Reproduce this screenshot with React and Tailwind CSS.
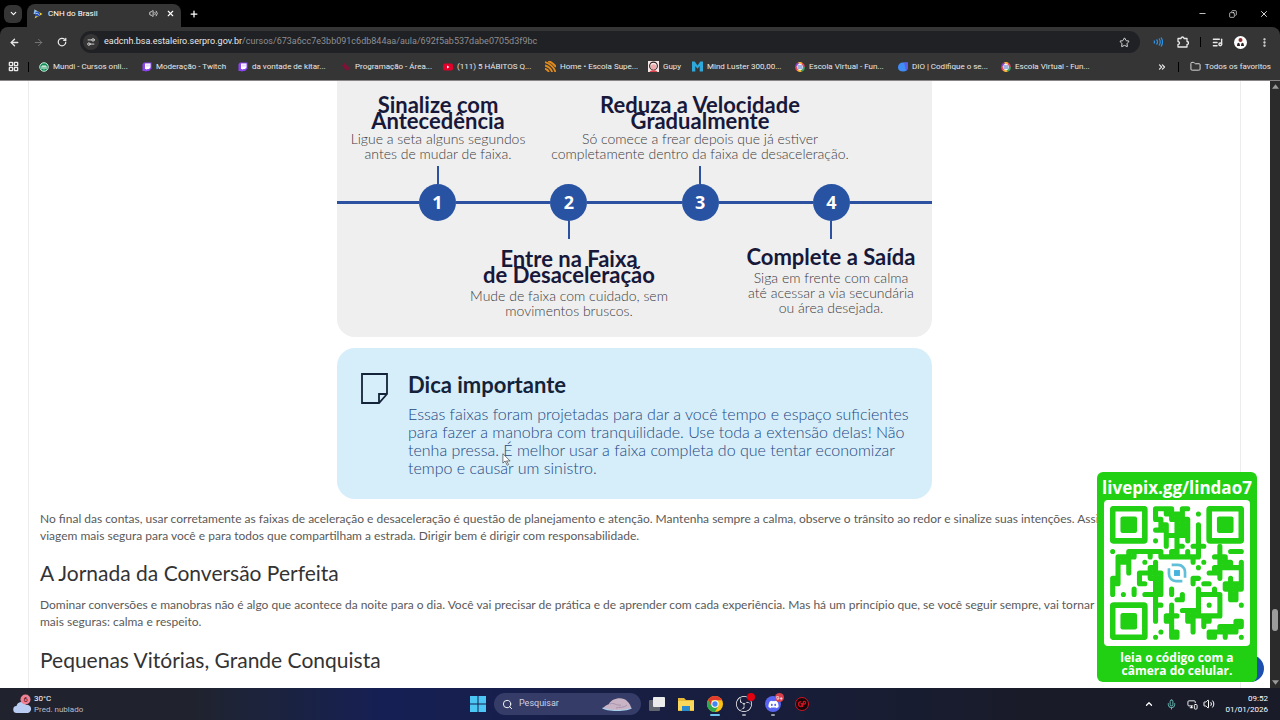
// src/App.jsx

import React, { useState } from "react";
import {
  ArrowLeft,
  ArrowRight,
  ChevronDown,
  ChevronUp,
  ChevronsRight,
  Copy,
  EllipsisVertical,
  Folder,
  LayoutGrid,
  ListMusic,
  Mic,
  Minus,
  MonitorSmartphone,
  Plus,
  RotateCw,
  Search,
  Settings2,
  Star,
  Volume2,
  X,
} from "lucide-react";
import { FaDiscord } from "react-icons/fa";
import { SiObsstudio } from "react-icons/si";

const TwitchIcon = () => (
  <svg viewBox="0 0 20 20" className="size-[10px] shrink-0">
    <path d="M1 4l3-3h15v12l-5 5h-4l-3 2v-2H1z" fill="#8b45f0" />
    <path d="M6 3h11v8l-3 3h-3l-2 2v-2H6z" fill="#fff" />
    <path d="M10 5v4M14 5v4" stroke="#b994f5" strokeWidth="1.5" />
  </svg>
);

const EscolaIcon = () => (
  <svg viewBox="0 0 20 20" className="size-[10px] shrink-0">
    <circle cx="10" cy="10" r="8" fill="#f3f3f3" />
    <g strokeWidth="3.5" fill="none">
      <path d="M2 9a8 8 0 0 1 6-7" stroke="#8a3fc0" />
      <path d="M7 2a8 8 0 0 1 8 2" stroke="#f2b134" />
      <path d="M14 3a8 8 0 0 1 4 7" stroke="#e0455a" />
      <path d="M2 9a8 8 0 0 0 4 8" stroke="#e0455a" />
      <path d="M5 16a8 8 0 0 0 8 2" stroke="#f2b134" />
      <path d="M12 18a8 8 0 0 0 6-8" stroke="#3fa35b" />
    </g>
    <path d="M5 8h10M5 12h10" stroke="#4261c9" strokeWidth="1.8" />
  </svg>
);

const MundiIcon = () => (
  <svg viewBox="0 0 20 20" className="size-[10px] shrink-0">
    <circle cx="10" cy="10" r="8.5" fill="#0d8a54" stroke="#c9f5dd" strokeWidth="2" />
    <path d="M6 14V8h8v6M10 8v7" stroke="#fff" strokeWidth="2" fill="none" />
  </svg>
);

const ProgramacaoIcon = () => (
  <svg viewBox="0 0 20 20" className="size-[10px] shrink-0">
    <path d="M2 7l5-5 4 4 7 6-5 6-5-4z" fill="#7d1236" />
  </svg>
);

const YoutubeIcon = () => (
  <svg viewBox="0 0 20 20" className="size-[10px] shrink-0">
    <rect y="3" width="20" height="14" rx="4" fill="#e3002b" />
    <path d="M8 7l5 3-5 3z" fill="#fff" />
  </svg>
);

const HomeIcon = () => (
  <svg viewBox="0 0 20 20" className="size-[11px] shrink-0">
    <path
      d="M0 2c9 3 16 9 19 18M0 8c7 2 11 6 13 12M0 14c4 1 6 3 7 6M6 0c6 2 11 6 14 11"
      stroke="#e08a1c"
      strokeWidth="3.4"
      fill="none"
    />
  </svg>
);

const GupyIcon = () => (
  <svg viewBox="0 0 20 20" className="size-[11px] shrink-0">
    <rect width="20" height="20" fill="#f6e6e6" />
    <circle cx="10" cy="9" r="7" fill="none" stroke="#2a1d22" strokeWidth="2" />
    <circle cx="10" cy="11" r="5" fill="#f0a9a9" />
    <path d="M3 20c1-4 13-4 14 0z" fill="#d8434e" />
  </svg>
);

const MindIcon = () => (
  <svg viewBox="0 0 20 20" className="size-[11px] shrink-0">
    <path d="M0 1h5l5 7 5-7h5v18h-6V9l-4 5-4-5v10H0z" fill="#2fa8dc" />
  </svg>
);

const DioIcon = () => (
  <svg viewBox="0 0 20 20" className="size-[10px] shrink-0">
    <path d="M0 11C0 4 5 1 10 1h10v9c0 6-4 9-10 9S0 16 0 11z" fill="#3f8df5" />
    <path d="M12 1h8v9c0 4-2 6-4 7z" fill="#5a5fe8" />
  </svg>
);

const bookmarks = [
  { label: "Mundi - Cursos onli...", Icon: MundiIcon, width: "w-[103px]" },
  { label: "Moderação - Twitch", Icon: TwitchIcon, width: "w-[96px]" },
  { label: "da vontade de kitar...", Icon: TwitchIcon, width: "w-[103px]" },
  { label: "Programação - Área...", Icon: ProgramacaoIcon, width: "w-[102px]" },
  { label: "(111) 5 HÁBITOS Q...", Icon: YoutubeIcon, width: "w-[102px]" },
  { label: "Home • Escola Supe...", Icon: HomeIcon, width: "w-[103px]" },
  { label: "Gupy", Icon: GupyIcon, width: "w-[44px]" },
  { label: "Mind Luster 300,00...", Icon: MindIcon, width: "w-[103px]" },
  { label: "Escola Virtual - Fun...", Icon: EscolaIcon, width: "w-[103px]" },
  { label: "DIO | Codifique o se...", Icon: DioIcon, width: "w-[103px]" },
  { label: "Escola Virtual - Fun...", Icon: EscolaIcon, width: "w-[103px]" },
];

// Each row is one line of modules, finder patterns are drawn apart
const qrRows = [
  "........####.##..........",
  "........#.####..#........",
  "........##.####..........",
  ".........##.###.#........",
  "........###.###.#........",
  "..........#####.#........",
  "........#.#.#.#.#........",
  "..........#.##.###..#....",
  "#..#######.##.#.#...#.###",
  ".####..#.########..###...",
  ".###..#.#......#.#..###.#",
  ".#.#...##.......#..######",
  ".#.#.#####........###...#",
  "##...#.###.....##...#.#.#",
  "##...##.##.....#.##..####",
  "#...#...##.#....#..#.####",
  "#.#.#.####.#.#..#####.##.",
  "........#...##..#...#.##.",
  "........##.#....#.#.#...#",
  "........#..#.####...#....",
  "........#.###.#######....",
  "........#.##..##.##....##",
  "...........#...#.#..#####",
  ".........#.##..#..######.",
  "........#..##.....##.#..#",
];

const qrPath = qrRows
  .flatMap((row, y) =>
    [...row].map((cell, x) => {
      if (cell !== "#") return "";
      let d = `M${x + 0.5} ${y + 0.5}h0`;
      if (row[x + 1] === "#") d += `M${x + 0.5} ${y + 0.5}h1`;
      if (qrRows[y + 1]?.[x] === "#") d += `M${x + 0.5} ${y + 0.5}v1`;
      return d;
    })
  )
  .join("");

const QrCode = () => (
  <svg viewBox="0 0 25 25" className="w-full">
    <path d={qrPath} stroke="#22d013" strokeWidth="0.95" strokeLinecap="round" />
    {[
      [0, 0],
      [18, 0],
      [0, 18],
    ].map(([x, y]) => (
      <g key={`${x}-${y}`}>
        <rect x={x + 0.5} y={y + 0.5} width="6" height="6" rx="0.2" fill="none" stroke="#22d013" strokeWidth="1.05" />
        <rect x={x + 1.95} y={y + 1.95} width="3.1" height="3.1" rx="0.4" fill="#22d013" />
      </g>
    ))}
    <g fill="none" stroke="#62bfd8" strokeWidth="0.5">
      <path d="M11.5 11h1.2a1.3 1.3 0 0 1 1.3 1.300v1.1" />
      <path d="M13.5 14h-1.200a1.3 1.3 0 0 1-1.300-1.300v-1.100" />
    </g>
    <rect x="11.95" y="11.95" width="1.1" height="1.1" fill="#43b4dd" />
  </svg>
);

const TabStrip = () => (
  <div className="flex h-[27px] items-center bg-black text-white">
    <button aria-label="Pesquisar guias" className="ml-1 flex size-[18px] items-center justify-center rounded-md bg-[#353535]">
      <ChevronDown size={9} strokeWidth={3} />
    </button>
    <div className="ml-[5px] flex h-[23px] w-[154px] items-center self-end rounded-t-lg bg-[#353535] px-[6px] pb-[4px]">
      <svg viewBox="0 0 20 20" className="size-[10px]">
        <path d="M3 1l16 9-16 9 4-9z" fill="#f2d13d" />
        <path d="M3 1l8 5-3 4H1z" fill="#8fc0f0" />
        <circle cx="9" cy="10" r="5" fill="#2450b8" />
        <path d="M5 9q4-2 8 3" stroke="#e8f0ff" strokeWidth="1.5" fill="none" />
      </svg>
      <span className="ml-[5px] flex-1 text-[8px]">CNH do Brasil</span>
      <button aria-label="Desativar som da guia" className="mr-[8px]">
        <Volume2 size={9} />
      </button>
      <button aria-label="Fechar guia">
        <X size={9} strokeWidth={3} />
      </button>
    </div>
    <button aria-label="Nova guia" className="ml-[8px]">
      <Plus size={10} strokeWidth={3} />
    </button>
    <div className="ml-auto flex items-center gap-[22px] pr-[11px]">
      <button aria-label="Minimizar">
        <Minus size={9} />
      </button>
      <button aria-label="Restaurar">
        <Copy size={8} className="-scale-x-100" />
      </button>
      <button aria-label="Fechar">
        <X size={10} />
      </button>
    </div>
  </div>
);

const Toolbar = () => {
  const [path, setPath] = useState("/cursos/673a6cc7e3bb091c6db844aa/aula/692f5ab537dabe0705d3f9bc");

  return (
    <div className="rounded-t-lg bg-[#353535] text-[#e8e8e8]">
      <div className="flex h-[30px] items-center pr-[10px] pl-[9px]">
        <button aria-label="Voltar">
          <ArrowLeft size={11} strokeWidth={3} />
        </button>
        <button aria-label="Avançar" className="ml-[13px] text-[#7a7a7a]">
          <ArrowRight size={11} strokeWidth={2} />
        </button>
        <button aria-label="Recarregar" className="ml-[13px]">
          <RotateCw size={10} strokeWidth={3} />
        </button>
        <div className="ml-[13px] flex h-[22px] flex-1 items-center rounded-full bg-[#202124] pr-[10px] pl-[3px]">
          <button aria-label="Ver informações do site" className="flex size-[16px] items-center justify-center rounded-full bg-[#353535]">
            <Settings2 size={10} className="-scale-y-100" />
          </button>
          <label className="ml-[5px] flex flex-1 text-[9px]">
            <span>eadcnh.bsa.estaleiro.serpro.gov.br</span>
            <input
              aria-label="Barra de endereço"
              className="flex-1 bg-transparent text-[#8e8f92] outline-none"
              value={path}
              onChange={(e) => setPath(e.target.value)}
            />
          </label>
          <button aria-label="Adicionar aos favoritos">
            <Star size={11} />
          </button>
        </div>
        <button aria-label="Extensão de áudio" className="ml-[13px] text-[#2f8fe0]">
          <svg viewBox="0 0 20 20" className="size-[10px]" fill="none" stroke="currentColor" strokeWidth="2.5">
            <path d="M2 7q2 3 0 6M7 5q4 5 0 10M12 3q5 7 0 14M16 1q6 9 0 18" />
          </svg>
        </button>
        <button aria-label="Extensões" className="ml-[14px]">
          <svg viewBox="0 0 24 24" className="size-[12px]" fill="none" stroke="currentColor" strokeWidth="2.6">
            <path d="M2 5h6a3 3 0 0 1 6 0h6v6a3 3 0 0 1 0 6v5H2v-5a3 3 0 0 0 0-6z" strokeLinejoin="round" />
          </svg>
        </button>
        <span className="mx-[11px] h-[10px] w-px bg-black" />
        <button aria-label="Controlar mídia">
          <ListMusic size={11} strokeWidth={3} />
        </button>
        <button aria-label="Perfil" className="ml-[11px]">
          <svg viewBox="0 0 26 26" className="size-[13px]">
            <circle cx="13" cy="13" r="13" fill="#fff" />
            <circle cx="13" cy="8" r="4" fill="#8c3030" />
            <path d="M6 20c0-9 6-9 6 0zM14 20c0-9 6-9 6 0z" fill="#2a2222" />
          </svg>
        </button>
        <button aria-label="Menu" className="ml-[12px]">
          <EllipsisVertical size={11} strokeWidth={3} />
        </button>
      </div>
      <nav className="flex h-[23px] items-center pr-[9px] pb-[4px] pl-[8px] text-[8px] whitespace-nowrap">
        <button aria-label="Aplicativos">
          <LayoutGrid size={11} strokeWidth={3} />
        </button>
        <span className="mr-[10px] ml-[9px] h-[10px] w-px bg-black" />
        {bookmarks.map(({ label, Icon, width }, i) => (
          <a key={i} href="#favorito" className={`flex shrink-0 items-center gap-[4px] ${width}`}>
            <Icon />
            {label}
          </a>
        ))}
        <button aria-label="Mais favoritos" className="ml-auto">
          <ChevronsRight size={10} strokeWidth={3} />
        </button>
        <span className="mx-[11px] h-[10px] w-px bg-black" />
        <a href="#favoritos" className="flex items-center gap-[4px]">
          <Folder size={11} strokeWidth={2} />
          Todos os favoritos
        </a>
      </nav>
    </div>
  );
};

const Step = ({ title, children, className, textClass = "mt-[2px]" }) => (
  <div className={`text-center ${className}`}>
    <h3 className="text-[22px] leading-[16px] font-bold text-[#17183a]">{title}</h3>
    <p className={`text-[14px] leading-[15px] font-light text-[#3c3c40] ${textClass}`}>{children}</p>
  </div>
);

const Timeline = () => (
  <div className="flex items-center">
    {[1, 2, 3, 4].map((n) => (
      <React.Fragment key={n}>
        <span className={n === 1 ? "h-[3px] w-[82px] bg-[#2b51a0]" : "h-[3px] flex-1 bg-[#2b51a0]"} />
        <div className="flex w-[37px] flex-col items-center">
          <span className={n % 2 ? "h-[18px] w-[2px] bg-[#2b51a0]" : "h-[18px]"} />
          <span className="flex size-[37px] items-center justify-center rounded-full bg-[#2853a3] font-['Open_Sans'] text-[18px] font-bold text-white">
            {n}
          </span>
          <span className={n % 2 ? "h-[18px]" : "h-[18px] w-[2px] bg-[#2b51a0]"} />
        </div>
      </React.Fragment>
    ))}
    <span className="h-[3px] w-[82px] bg-[#2b51a0]" />
  </div>
);

const Lesson = () => (
  <main className="mr-[29px] ml-7 flex-1 border-x border-[#ececec] px-[11px] text-[#5a5a5a]">
    <section className="mx-auto max-w-[595px] rounded-b-[18px] bg-[#efefef] pt-[16px] pb-[19px]">
      <div className="flex">
        <Step className="w-[202px]" title={<>Sinalize com<br />Antecedência</>}>
          Ligue a seta alguns segundos<br />antes de mudar de faixa.
        </Step>
        <Step className="w-[322px]" title={<>Reduza a Velocidade<br />Gradualmente</>}>
          Só comece a frear depois que já estiver<br />completamente dentro da faixa de desaceleração.
        </Step>
      </div>
      <div className="pt-[5px] pb-[10px]">
        <Timeline />
      </div>
      <div className="flex justify-between pl-[101px]">
        <Step className="w-[262px] pt-[2px]" textClass="mt-[5px]" title={<>Entre na Faixa<br />de Desaceleração</>}>
          Mude de faixa com cuidado, sem<br />movimentos bruscos.
        </Step>
        <Step className="w-[202px]" textClass="mt-[5px]" title="Complete a Saída">
          Siga em frente com calma<br />até acessar a via secundária<br />ou área desejada.
        </Step>
      </div>
    </section>

    <section className="relative mx-auto mt-[11px] flex max-w-[595px] gap-5 rounded-[18px] bg-[#d6eefa] px-6 pt-6 pb-[22px]">
      <svg viewBox="0 0 27 31" className="mt-px h-[31px] w-[27px] shrink-0" fill="none" stroke="#14223a" strokeWidth="1.8">
        <path d="M1 1h25v20l-8 9H1zM26 21h-8v9" />
      </svg>
      <div>
        <h3 className="text-[22px] leading-[26px] font-bold text-[#14223a]">Dica importante</h3>
        <p className="mt-[7px] text-[16px] leading-[18px] font-light whitespace-nowrap text-[#24477f]">
          Essas faixas foram projetadas para dar a você tempo e espaço suficientes<br />
          para fazer a manobra com tranquilidade. Use toda a extensão delas! Não<br />
          tenha pressa. É melhor usar a faixa completa do que tentar economizar<br />
          tempo e causar um sinistro.
        </p>
      </div>
      {/* Mouse pointer */}
      <svg viewBox="0 0 12 18" className="absolute top-[105px] left-[165px] h-[13px] w-[9px]">
        <path d="M1 1v13l3-3 3 6 2-1-3-5h5z" fill="#fff" stroke="#444" />
      </svg>
    </section>

    <p className="mt-[11px] text-[12px] leading-[17px] whitespace-nowrap">
      No final das contas, usar corretamente as faixas de aceleração e desaceleração é questão de planejamento e atenção. Mantenha sempre a calma, observe o trânsito ao redor e sinalize suas intenções. Assim, a<br />
      viagem mais segura para você e para todos que compartilham a estrada. Dirigir bem é dirigir com responsabilidade.
    </p>
    <h2 className="mt-[16px] text-[21px] leading-[26px] text-[#333]">A Jornada da Conversão Perfeita</h2>
    <p className="mt-[10px] text-[12px] leading-[17px] whitespace-nowrap">
      Dominar conversões e manobras não é algo que acontece da noite para o dia. Você vai precisar de prática e de aprender com cada experiência. Mas há um princípio que, se você seguir sempre, vai tornar suas<br />
      mais seguras: calma e respeito.
    </p>
    <h2 className="mt-[17px] text-[21px] leading-[26px] text-[#333]">Pequenas Vitórias, Grande Conquista</h2>
  </main>
);

const Scrollbar = () => (
  <div className="flex w-[10px] flex-col items-center justify-between bg-[#2b2b2b] py-[3px]">
    <svg viewBox="0 0 6 4" className="h-[5px] w-[7px]">
      <path d="M0 4l3-4 3 4z" fill="#9a9a9a" />
    </svg>
    <span className="mt-auto mb-[49px] h-[22px] w-[6px] rounded-full bg-[#9d9d9d]" />
    <svg viewBox="0 0 6 4" className="h-[5px] w-[7px]">
      <path d="M0 0l3 4 3-4z" fill="#9a9a9a" />
    </svg>
  </div>
);

const DonationCard = () => (
  <aside className="absolute right-[23px] bottom-[6px] flex w-[160px] flex-col items-center rounded-md bg-[#22d013] pt-[4px] pb-[5px] font-['Open_Sans',sans-serif] font-bold text-white">
    <p className="text-[17px] leading-[24px]">livepix.gg/lindao7</p>
    <div className="w-[146px] rounded-sm bg-white p-[6px]">
      <QrCode />
    </div>
    <p className="mt-[5px] text-center text-[12px] leading-[13px]">
      leia o código com a<br />câmera do celular.
    </p>
  </aside>
);

const Taskbar = () => (
  <footer className="grid h-8 grid-cols-[1fr_auto_1fr] items-center bg-linear-to-r from-[#20232e] from-15% via-[#161f54] via-30% to-[#191b29] to-80% font-[Roboto,sans-serif] text-[8px] text-white">
    <div className="flex items-center pl-[12px]">
      <svg viewBox="0 0 40 40" className="size-5">
        <path d="M10 38a7 7 0 0 1-1-14 10 10 0 0 1 19-2 8 8 0 0 1 4 16z" fill="#b9cdf3" />
        <circle cx="27" cy="11" r="10" fill="#ee8193" />
        <text x="27" y="16" fontSize="15" fill="#3a1520" textAnchor="middle">6</text>
      </svg>
      <p className="ml-[2px] leading-[11px]">
        30°C<br />
        <span className="text-[#b9bcc6]">Pred. nublado</span>
      </p>
    </div>

    <div className="flex items-center">
      <button aria-label="Iniciar">
        <svg viewBox="0 0 16 16" className="size-4" fill="#4cc6f4">
          <path d="M0 0h7.5v7.5H0zM8.5 0H16v7.5H8.5zM0 8.5h7.5V16H0zM8.5 8.5H16V16H8.5z" />
        </svg>
      </button>
      <label className="ml-2 flex h-[22px] w-[147px] items-center rounded-full bg-[#353c68] px-[8px]">
        <Search size={11} strokeWidth={2} className="shrink-0" />
        <input aria-label="Pesquisar" placeholder="Pesquisar" className="ml-[6px] w-full min-w-0 bg-transparent text-[9px] outline-none placeholder:text-[#cfd2e0]" />
        <svg viewBox="0 0 64 30" className="h-[15px] w-[32px] shrink-0">
          <path d="M2 22c6 8 54 8 60 0-4-4-54-4-60 0z" fill="#a9d4ef" />
          <path d="M6 22c0-4 6-6 10-8C20 2 44-2 52 8c6 6 8 10 8 14-14 5-44 5-54 0z" fill="#c9b4c6" />
          <path d="M18 14c8-4 12 4 22 2M30 22c6-2 16 0 22-6" stroke="#a892ae" strokeWidth="2" fill="none" />
        </svg>
      </label>
      <div className="ml-2 flex items-center gap-[13px]">
        <button aria-label="Visão de tarefas">
          <svg viewBox="0 0 16 16" className="size-4">
            <rect x="0" y="4" width="11" height="11" rx="1" fill="#62666f" />
            <rect x="4" y="1" width="12" height="10" rx="1" fill="#ececec" />
          </svg>
        </button>
        <button aria-label="Explorador de Arquivos">
          <svg viewBox="0 0 16 16" className="size-4">
            <path d="M0 2h6l2 2h8v11H0z" fill="#e9b93a" />
            <path d="M0 5h16v9H0z" fill="#fbd75b" />
            <path d="M4 10h8v5H4z" fill="#2c8bd0" />
          </svg>
        </button>
        <button aria-label="Google Chrome" className="relative">
          <svg viewBox="0 0 48 48" className="size-4">
            <circle cx="24" cy="24" r="24" fill="#fbc116" />
            <path d="M24 48A24 24 0 0 1 3 12l11 18 10 5 10-5z" fill="#2da94f" />
            <path d="M45 13A24 24 0 0 0 3 12l11 18V13z" fill="#e33b2e" />
            <circle cx="24" cy="24" r="11" fill="#fff" />
            <circle cx="24" cy="24" r="8" fill="#4285f4" />
          </svg>
          <span className="absolute inset-x-[3px] -bottom-[4px] h-[2px] rounded-full bg-[#6cc3f0]" />
        </button>
        <button aria-label="OBS Studio" className="relative">
          <SiObsstudio size={16} />
          <span className="absolute -top-[3px] -right-[3px] size-2 rounded-full bg-[#e3000f]" />
          <span className="absolute inset-x-[6px] -bottom-[4px] h-[2px] rounded-full bg-[#9a9cab]" />
        </button>
        <button aria-label="Discord" className="relative flex size-4 items-center justify-center rounded-full bg-[#5865f2]">
          <FaDiscord size={11} />
          <span className="absolute -top-[3px] -right-[3px] flex size-[9px] items-center justify-center rounded-full bg-[#d8404d] text-[6px]">9+</span>
          <span className="absolute inset-x-[6px] -bottom-[4px] h-[2px] rounded-full bg-[#9a9cab]" />
        </button>
        <button aria-label="Gravador">
          <svg viewBox="0 0 32 32" className="size-4" fill="none" stroke="#d01322">
            <circle cx="16" cy="16" r="13" fill="#160509" strokeWidth="2" />
            <path d="M14 11q-5 0-5 5t5 5l2-2v-4h-3M17 22l2-11q5-1 4 3-1 3-4 2" strokeWidth="2.500" />
          </svg>
        </button>
      </div>
    </div>

    <div className="flex items-center justify-end pr-[12px]">
      <button aria-label="Mostrar ícones ocultos">
        <ChevronUp size={10} strokeWidth={3} />
      </button>
      <Mic size={11} className="ml-[12px] text-[#6dc6bd]" />
      <MonitorSmartphone size={11} className="ml-[10px]" />
      <Volume2 size={12} className="ml-[5px]" />
      <p className="ml-[10px] text-right leading-[11px]">
        09:52<br />01/01/2026
      </p>
    </div>
  </footer>
);

const App = () => {
  return (
    <div className="flex h-screen flex-col overflow-hidden bg-white">
      <header className="bg-black font-[Roboto,sans-serif]">
        <TabStrip />
        <Toolbar />
      </header>
      <div className="relative flex min-h-0 flex-1 overflow-hidden border-t border-[#8a8587] font-[Lato,sans-serif]">
        <Lesson />
        <Scrollbar />
        <button aria-label="Ajuda" className="absolute right-[16px] bottom-[6px] size-[27px] rounded-full bg-[#1d4fae]" />
        <DonationCard />
      </div>
      <Taskbar />
    </div>
  );
};

export default App;
